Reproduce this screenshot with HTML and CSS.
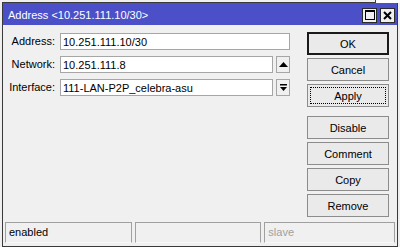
FILE: index.html
```html
<!DOCTYPE html>
<html lang="en">
<head>
  <meta charset="UTF-8" />
  <title>Address &lt;10.251.111.10/30&gt;</title>
  <link rel="stylesheet" href="styles.css">
</head>
<body>
  <div class="backdrop-corner"></div>
  <div class="window">
    <div class="titlebar">
      <span class="title">Address &lt;10.251.111.10/30&gt;</span>
      <div class="title-buttons">
        <span class="tbtn">
          <svg width="10" height="10" viewBox="0 0 10 10"><rect x="0.5" y="0.5" width="9" height="9" fill="none" stroke="#000"/><rect x="0" y="0" width="10" height="2" fill="#000"/></svg>
        </span>
        <span class="tbtn">
          <svg width="9" height="9" viewBox="0 0 9 9"><path d="M1 1 L8 8 M8 1 L1 8" stroke="#000" stroke-width="2"/></svg>
        </span>
      </div>
    </div>

    <div class="content">
      <div class="form">
        <label class="lbl">Address:</label>
        <div class="field"><input class="inp" value="10.251.111.10/30" /></div>

        <label class="lbl">Network:</label>
        <div class="field">
          <input class="inp" value="10.251.111.8" />
          <span class="side-btn">
            <svg width="9" height="6" viewBox="0 0 9 6"><path d="M4.5 0 L9 5 L0 5 Z" fill="#000"/></svg>
          </span>
        </div>

        <label class="lbl">Interface:</label>
        <div class="field">
          <input class="inp" value="111-LAN-P2P_celebra-asu" />
          <span class="side-btn">
            <svg width="9" height="8" viewBox="0 0 9 8"><rect x="1" y="0" width="7" height="1.5" fill="#000"/><path d="M1 3 L8 3 L4.5 7 Z" fill="#000"/></svg>
          </span>
        </div>
      </div>

      <div class="actions">
        <button class="btn default">OK</button>
        <button class="btn">Cancel</button>
        <button class="btn focus"><span>Apply</span></button>
        <button class="btn gap">Disable</button>
        <button class="btn">Comment</button>
        <button class="btn">Copy</button>
        <button class="btn">Remove</button>
      </div>
    </div>

    <div class="statusbar">
      <div class="cell">enabled</div>
      <div class="cell"></div>
      <div class="cell muted">slave</div>
    </div>
  </div>
</body>
</html>
```

FILE: styles.css
```css
* {
  box-sizing: border-box;
}

body {
  margin: 0;
  width: 400px;
  height: 247px;
  overflow: hidden;
  background: #f0f0f0;
  font-family: "Liberation Sans", Arial, sans-serif;
  font-size: 11px;
  color: #000;
  position: relative;
}

/* piece of the window behind, top right */
.backdrop-corner {
  position: absolute;
  top: 0;
  right: 0;
  width: 25px;
  height: 3px;
  background: #fff;
  border-left: 1px solid #404040;
}

.window {
  margin: 2px 0 0 2px;
  width: 396px;
  height: 245px;
  border: 1px solid #3a3a3a;
  background: #f0f0f0;
  display: flex;
  flex-direction: column;
}

.titlebar {
  height: 22px;
  background: #4b50c8;
  display: flex;
  align-items: center;
  justify-content: space-between;
  padding: 0 2px 0 5px;
  flex-shrink: 0;
}

.title {
  color: #fff;
  font-size: 11px;
  padding-top: 1px;
}

.title-buttons {
  display: flex;
  gap: 3px;
  padding-top: 2px;
}

.tbtn {
  width: 15px;
  height: 15px;
  border: 1px solid #2a2a2a;
  background: #f0f0f0;
  display: flex;
  align-items: center;
  justify-content: center;
}

.content {
  flex: 1;
  display: flex;
  gap: 17px;
  padding: 7px 7px 0 0;
}

.form {
  display: grid;
  grid-template-columns: 52px 230px;
  column-gap: 5px;
  row-gap: 6px;
  align-content: start;
  padding-top: 1px;
}

.lbl {
  text-align: right;
  line-height: 17px;
}

.field {
  display: flex;
  gap: 3px;
  height: 17px;
}

.inp {
  flex: 1;
  min-width: 0;
  height: 17px;
  border: 1px solid #a6a6a6;
  background: #fff;
  font: 11px "Liberation Sans", Arial, sans-serif;
  color: #000;
  padding: 0 2px;
  outline: none;
}

.side-btn {
  width: 14px;
  height: 17px;
  border: 1px solid #a6a6a6;
  background: #f0f0f0;
  display: flex;
  align-items: center;
  justify-content: center;
}

.actions {
  display: flex;
  flex-direction: column;
  gap: 3px;
  width: 82px;
}

.btn {
  height: 23px;
  border: 1px solid #8c8c8c;
  background: #eaeaea;
  font: 11px "Liberation Sans", Arial, sans-serif;
  color: #000;
  padding: 0;
}

.btn.default {
  border: 2px solid #1a1a1a;
}

.btn.focus {
  padding: 2px;
}

.btn.focus span {
  display: flex;
  height: 100%;
  align-items: center;
  justify-content: center;
  border: 1px dotted #000;
}

.btn.gap {
  margin-top: 6px;
}

.statusbar {
  display: flex;
  gap: 3px;
  padding: 0 2px 3px 2px;
  flex-shrink: 0;
}

.cell {
  width: 127px;
  height: 21px;
  border: 1px solid #a0a0a0;
  border-bottom-color: #f8f8f8;
  padding: 0 3px;
  line-height: 19px;
}

.cell:last-child {
  width: 131px;
}

.muted {
  color: #a0a0a0;
}
```
